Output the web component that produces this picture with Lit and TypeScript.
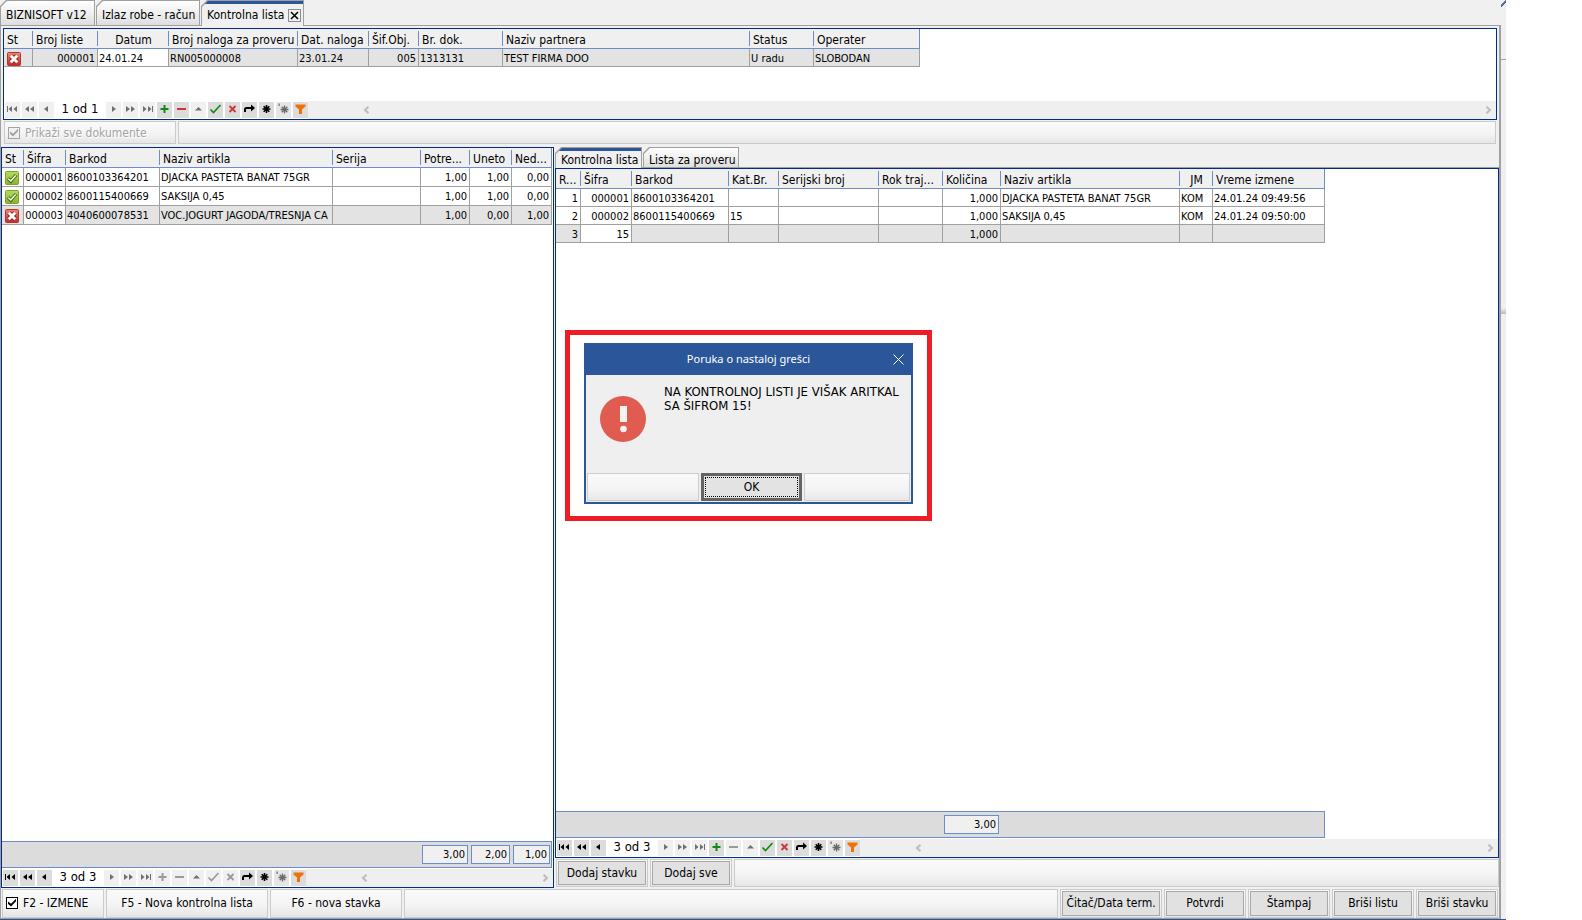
import { LitElement, html, css, svg, nothing, TemplateResult } from "lit";
import { customElement, property } from "lit/decorators.js";
import { classMap } from "lit/directives/class-map.js";

const base = css`
  * { box-sizing: border-box; }
  :host {
    --line: #a0a0a0;
    --navy: #002d8c;
    --blue: #6c8ccb;
    --accent: #2b579a;
    --face: #f0f0f0;
    font-family: "DejaVu Sans Condensed", "DejaVu Sans", Tahoma, sans-serif;
    font-size: 12px;
    color: #000;
  }
  button { font: inherit; color: inherit; margin: 0; padding: 0; border: 0; }
`;

/* ---------- navigator glyphs, centred on (7.5, 8) ---------- */
const glyphs: Record<string, TemplateResult> = {
  first: svg`<path d="M2 5h1v6h-1zM7 5v6L3.5 8zM12 5v6L8.5 8z"/>`,
  pagePrev: svg`<path d="M7 5v6L3 8zM12 5v6L8 8z"/>`,
  prev: svg`<path d="M9 5v6L5 8z"/>`,
  next: svg`<path d="M6 5v6l4-3z"/>`,
  pageNext: svg`<path d="M3 5v6l4-3zM8 5v6l4-3z"/>`,
  last: svg`<path d="M3 5v6l3.5-3zM8 5v6l3.5-3zM12 5h1v6h-1z"/>`,
  add: svg`<path d="M6.5 4h2v3h3v2h-3v3h-2v-3h-3v-2h3z"/>`,
  remove: svg`<path d="M3 7h9v2h-9z"/>`,
  edit: svg`<path d="M4 9.5h7L7.500 6z"/>`,
  post: svg`<path d="M2.500 8.500L5.500 11.500L12.500 4" fill="none" stroke="currentColor" stroke-width="1.700"/>`,
  cancel: svg`<path d="M4.500 5L10.500 11M10.500 5L4.500 11" fill="none" stroke="currentColor" stroke-width="1.800"/>`,
  refresh: svg`<path d="M3 11V8.500Q3 7 4.500 7H10" fill="none" stroke="currentColor" stroke-width="2"/><path d="M9 3.500v7L13 7z"/>`,
  mark: svg`<path d="M7.500 4v8M3.500 8h8M4.700 5.200l5.600 5.600M10.300 5.200l-5.600 5.600" fill="none" stroke="currentColor" stroke-width="1.600"/>`,
  goto: svg`<path d="M8.500 4.500v8M4.500 8.500h8M5.700 5.700l5.600 5.600M11.300 5.700l-5.600 5.600" fill="none" stroke="currentColor" stroke-width="1.300"/><path d="M2.500 2.500h1.200v2.500h-1.200z"/>`,
  filter: svg`<path d="M2.500 3.500h10v2L9 8.500v4.500h-3V8.500L2.500 5.500z"/>`,
};

const tones: Record<string, string> = {
  add: "green", remove: "red", post: "green", cancel: "red", goto: "grey", filter: "orange",
};

const before = ["first", "pagePrev", "prev"];
const after = ["next", "pageNext", "last", "add", "remove", "edit", "post", "cancel", "refresh", "mark", "goto", "filter"];

@customElement("record-navigator")
class RecordNavigator extends LitElement {
  @property() label = "";
  @property({ attribute: false }) off: string[] = [];

  static styles = [base, css`
    :host { display: flex; height: 18px; background: #fff; flex: none; }
    .buttons { display: flex; gap: 2px; padding: 1px 0 1px 1px; }
    button { width: 15px; height: 16px; background: #dcdcdc; display: block; }
    button:disabled { background: var(--face); color: #707070; }
    svg { display: block; fill: currentColor; }
    .green:enabled { color: #108a10; }
    .red:enabled { color: #d03434; }
    .orange:enabled { color: #ef7208; }
    .grey:enabled { color: #6a6a6a; background: #e6e6e6; }
    .add:disabled, .remove:disabled, .post:disabled, .cancel:disabled { color: #9a9a9a; }
    .label { width: 48px; text-align: center; font-size: 13px; line-height: 14px; white-space: nowrap; }
    .scroll { flex: 1; background: #efefef; display: flex; justify-content: space-between; align-items: center; padding: 0 4px 0 55px; }
    .scroll svg { fill: none; stroke: #bcbcbc; stroke-width: 2; }
  `];

  private button(name: string) {
    return html`<button class="${name} ${tones[name] ?? ""}" aria-label=${name} ?disabled=${this.off.includes(name)}>
      <svg width="15" height="16" viewBox="0 1 15 16">${glyphs[name]}</svg>
    </button>`;
  }

  render() {
    return html`
      <div class="buttons">
        ${before.map((n) => this.button(n))}
        <span class="label">${this.label}</span>
        ${after.map((n) => this.button(n))}
      </div>
      <div class="scroll">
        <svg width="7" height="8" viewBox="0 0 7 8"><path d="M5.500 .8L2 4l3.500 3.200"/></svg>
        <svg width="7" height="8" viewBox="0 0 7 8"><path d="M1.500 .8L5 4L1.500 7.200"/></svg>
      </div>`;
  }
}

/* ---------- data grid ---------- */
interface Column { title: string; width: number; align?: "right" | "center"; head?: "center"; total?: string; }

const statusIcon = (kind: string) => {
  const ok = kind === "ok";
  return html`<svg class="status" width="14" height="14" viewBox="0 0 14 14" role="img" aria-label=${ok ? "U redu" : "Neispravno"}>
    <defs><linearGradient id=${ok ? "g" : "r"} x1="0" y1="0" x2="0" y2="1">
      <stop offset="0" stop-color=${ok ? "#b5dc5c" : "#ea8a80"}></stop>
      <stop offset="1" stop-color=${ok ? "#86b52c" : "#c22a24"}></stop>
    </linearGradient></defs>
    <rect x=".5" y=".5" width="13" height="13" rx="1" fill=${ok ? "url(#g)" : "url(#r)"} stroke=${ok ? "#7da32c" : "#b8322c"}></rect>
    ${ok
      ? svg`<path d="M3 7.500L5.800 10.300L11 4" fill="none" stroke="#4c6a1c" stroke-width="3.400"/><path d="M3.300 7.800L5.800 10L10.700 4.400" fill="none" stroke="#f4fbe4" stroke-width="1.500"/>`
      : svg`<path d="M4 4L10 10M10 4L4 10" fill="none" stroke="#8e1c18" stroke-width="4.800"/><path d="M3.800 3.800L10.200 10.200M10.200 3.800L3.800 10.200" fill="none" stroke="#fff" stroke-width="3"/>`}
  </svg>`;
};

@customElement("data-grid")
class DataGrid extends LitElement {
  @property({ attribute: false }) columns: Column[] = [];
  @property({ attribute: false }) rows: string[][] = [];
  @property({ attribute: false }) off: string[] = [];
  @property({ type: Number }) selected = -1;
  @property({ type: Number }) focused = -1;
  @property({ type: Boolean }) totals = false;
  @property({ type: Boolean }) roomy = false;
  @property() label = "";

  static styles = [base, css`
    :host { display: flex; flex-direction: column; border: 1px solid var(--navy); background: #fff; min-width: 0; overflow: hidden; }
    .view { flex: 1; min-height: 0; }
    table { table-layout: fixed; border-collapse: separate; border-spacing: 0; }
    th, td { overflow: hidden; white-space: nowrap; text-align: left; }
    th {
      height: 20px; padding: 3px 0 0 3px; font-weight: normal; line-height: 16px;
      border-bottom: 1px solid var(--blue);
      background: linear-gradient(var(--blue), var(--blue)) right 2px / 1px 15px no-repeat, var(--face);
    }
    th:last-child { border-right: 1px solid var(--blue); background: var(--face); }
    th.center { text-align: center; padding-left: 0; }
    td { height: 18px; padding: 2px 2px 0 1px; font-size: 11px; line-height: 15px; border-right: 1px solid var(--line); border-bottom: 1px solid var(--line); }
    .tall td { height: 19px; line-height: 16px; }
    .right { text-align: right; }
    tr.current td { background: #e3e3e3; }
    tr.current td.focus { background: #fff; }
    .status { display: block; margin-left: 2px; }
    .totals { display: flex; flex: none; height: 27px; padding: 3px 0; background: #dcdcdc; border: solid var(--blue); border-width: 1px 0; box-shadow: inset -1px 0 var(--blue); margin-bottom: 1px; align-self: flex-start; }
    .total { padding: 0 2px 0 1px; display: flex; }
    output { flex: 1; height: 19px; border: 1px solid var(--blue); background: var(--face); font-size: 11px; line-height: 18px; padding-right: 2px; text-align: right; }
  `];

  render() {
    const width = this.columns.reduce((sum, c) => sum + c.width, 0);
    return html`
      <div class="view">
        <table class=${classMap({ tall: this.roomy })} style="width:${width}px">
          <colgroup>${this.columns.map((c) => html`<col style="width:${c.width}px">`)}</colgroup>
          <thead><tr>${this.columns.map((c) => html`<th class=${c.head ?? ""}>${c.title}</th>`)}</tr></thead>
          <tbody>
            ${this.rows.map((row, r) => html`<tr class=${classMap({ current: r === this.selected })}>
              ${row.map((value, i) => html`<td class=${classMap({ right: this.columns[i].align === "right", focus: i === this.focused })}>${
                value === "ok" || value === "bad" ? statusIcon(value) : value}</td>`)}
            </tr>`)}
          </tbody>
        </table>
      </div>
      ${this.totals ? html`<div class="totals">
        ${this.columns.map((c) => html`<div class="total" style="width:${c.width}px">${c.total ? html`<output>${c.total}</output>` : nothing}</div>`)}
      </div>` : nothing}
      <record-navigator .label=${this.label} .off=${this.off}></record-navigator>`;
  }
}

/* ---------- error dialog ---------- */
@customElement("error-dialog")
class ErrorDialog extends LitElement {
  static styles = [base, css`
    :host { display: block; border: 5px solid #ee1c25; background: #fff; padding: 8px 14px 12px; }
    .dialog { border: 2px solid var(--accent); border-top: 0; background: #efefef; }
    header { background: var(--accent); color: #fff; height: 32px; display: flex; align-items: center; font-family: "Noto Sans", "Open Sans", sans-serif; }
    h1 { flex: 1; margin: 0; padding: 0 0 2px 26px; font-size: 11px; font-weight: normal; text-align: center; }
    .close { width: 26px; height: 32px; background: none; display: grid; place-items: center; }
    .body { display: flex; height: 97px; padding: 10px 0 0 14px; gap: 18px; }
    .body svg { margin-top: 11px; flex: none; }
    p { margin: 0; font-size: 13px; line-height: 14px; white-space: nowrap; }
    footer { display: flex; gap: 2px; padding: 1px; height: 30px; }
    .pad { flex: 1; border: 1px solid #cdcdcd; background: linear-gradient(#fafafa, #f4f4f4 60%, #e8e8e8); }
    .pad.end { flex: none; width: 106px; }
    .ok { width: 101px; border: 3px solid #646464; background: #e3e3e3; padding: 1px; }
    .ok span { display: block; height: 20px; line-height: 18px; border: 1px dotted #000; }
  `];

  render() {
    return html`<div class="dialog" role="alertdialog" aria-labelledby="t" aria-describedby="m">
      <header>
        <h1 id="t">Poruka o nastaloj grešci</h1>
        <button class="close" aria-label="Zatvori"><svg width="11" height="11" viewBox="0 0 11 11"><path d="M.5 .5l10 10M10.500 .5l-10 10" stroke="#fff"></path></svg></button>
      </header>
      <div class="body">
        <svg width="46" height="46" viewBox="0 0 46 46"><circle cx="23" cy="23" r="23" fill="#e05c50"></circle><path d="M20 10h7v16h-7z" fill="#f6f2f0"></path><circle cx="23.500" cy="33" r="3.300" fill="#f6f2f0"></circle></svg>
        <p id="m">NA KONTROLNOJ LISTI JE VIŠAK ARITKAL<br>SA ŠIFROM 15!</p>
      </div>
      <footer><div class="pad"></div><button class="ok"><span>OK</span></button><div class="pad end"></div></footer>
    </div>`;
  }
}

/* ---------- data ---------- */
const listColumns: Column[] = [
  { title: "St", width: 29 },
  { title: "Broj liste", width: 65, align: "right" },
  { title: "Datum", width: 71, head: "center" },
  { title: "Broj naloga za proveru", width: 129 },
  { title: "Dat. naloga", width: 71 },
  { title: "Šif.Obj.", width: 50, align: "right" },
  { title: "Br. dok.", width: 84 },
  { title: "Naziv partnera", width: 247 },
  { title: "Status", width: 64 },
  { title: "Operater", width: 106 },
];
const listRows = [["bad", "000001", "24.01.24", "RN005000008", "23.01.24", "005", "1313131", "TEST FIRMA DOO", "U radu", "SLOBODAN"]];

const itemColumns: Column[] = [
  { title: "St", width: 22 },
  { title: "Šifra", width: 42, align: "right" },
  { title: "Barkod", width: 94 },
  { title: "Naziv artikla", width: 173 },
  { title: "Serija", width: 88 },
  { title: "Potre...", width: 49, align: "right", total: "3,00" },
  { title: "Uneto", width: 42, align: "right", total: "2,00" },
  { title: "Ned...", width: 40, align: "right", total: "1,00" },
];
const itemRows = [
  ["ok", "000001", "8600103364201", "DJACKA PASTETA BANAT 75GR", "", "1,00", "1,00", "0,00"],
  ["ok", "000002", "8600115400669", "SAKSIJA 0,45", "", "1,00", "1,00", "0,00"],
  ["bad", "000003", "4040600078531", "VOC.JOGURT JAGODA/TRESNJA CA", "", "1,00", "0,00", "1,00"],
];

const checkColumns: Column[] = [
  { title: "R...", width: 25, align: "right" },
  { title: "Šifra", width: 51, align: "right" },
  { title: "Barkod", width: 97 },
  { title: "Kat.Br.", width: 50 },
  { title: "Serijski broj", width: 100 },
  { title: "Rok traj...", width: 64 },
  { title: "Količina", width: 58, align: "right", total: "3,00" },
  { title: "Naziv artikla", width: 179 },
  { title: "JM", width: 33, head: "center" },
  { title: "Vreme izmene", width: 112 },
];
const checkRows = [
  ["1", "000001", "8600103364201", "", "", "", "1,000", "DJACKA PASTETA BANAT 75GR", "KOM", "24.01.24 09:49:56"],
  ["2", "000002", "8600115400669", "15", "", "", "1,000", "SAKSIJA 0,45", "KOM", "24.01.24 09:50:00"],
  ["3", "15", "", "", "", "", "1,000", "", "", ""],
];

const windowTabs = [
  { title: "BIZNISOFT v12", width: 95 },
  { title: "Izlaz robe - račun", width: 104 },
  { title: "Kontrolna lista", width: 103, active: true, closable: true },
];
const sideTabs = [
  { title: "Kontrolna lista", width: 87, active: true },
  { title: "Lista za proveru", width: 96 },
];

type Tab = { title: string; width: number; active?: boolean; closable?: boolean };

@customElement("app-root")
class AppRoot extends LitElement {
  static styles = [base, css`
    :host { display: flex; min-height: 100vh; background: #fff; padding-right: 76px; position: relative; }
    .window { flex: 1; min-width: 0; display: flex; flex-direction: column; background: var(--face); border-bottom: 1px solid var(--accent); }
    .edge { width: 5px; flex: none; background: var(--face); border-bottom: 1px solid var(--accent); display: flex; flex-direction: column; }
    .edge .cap { height: 60px; border-bottom: 1px solid var(--line); background: linear-gradient(135deg, var(--face) 3px, var(--line) 3px, var(--accent) 5px, var(--face) 5px); }
    .edge .grip { margin-top: 248px; height: 6px; background: linear-gradient(#f0f0f0, #b8b8b8); }

    .tabs { display: flex; gap: 1px; height: 26px; background: linear-gradient(var(--line), var(--line)) bottom / 100% 1px no-repeat; }
    .small { height: 21px; }
    .tab { position: relative; padding: 4px 0 0 6px; background: var(--line); white-space: nowrap; clip-path: polygon(0 6px, 6px 0, 100% 0, 100% 100%, 0 100%); }
    .tab::before { content: ""; position: absolute; inset: 1px; background: linear-gradient(#fefefe, #f0f0f0 50%, #dedede); clip-path: polygon(0 6px, 6px 0, 100% 0, 100% 100%, 0 100%); }
    .tab.active::before { background: linear-gradient(var(--accent) 3px, var(--face) 3px); bottom: 0; }
    .tab button { position: relative; background: none; line-height: 22px; }
    .small .tab button { line-height: 19px; }
    .tab .shut { width: 13px; height: 13px; border: 1px solid #8c8c8c; display: grid; place-items: center; }
    .tab.closable { display: flex; align-items: center; gap: 4px; }

    .page { flex: 1; display: flex; flex-direction: column; border: solid var(--line); border-width: 0 2px 1px 1px; }
    .lists { margin: 2px 2px 1px; height: 92px; }
    .bar { display: flex; gap: 2px; height: 29px; }
    .filters { height: 23px; margin: 0 3px 3px; }
    .panel { display: flex; align-items: center; border: 1px solid #cbcbcb; background: linear-gradient(#fafafa, #f4f4f4 55%, #e6e6e6); }
    .fill { flex: 1; }
    .panel > button { height: 100%; width: 100%; border: 1px solid #a8a8a8; background: #e1e1e1; white-space: nowrap; }
    .holder { padding: 1px; }
    .commands .panel > button { padding-bottom: 2px; }
    .commands label { padding-bottom: 2px; }
    .panel.flat > button { border: 0; background: none; }
    .w82 { width: 82px; } .w92 { width: 92px; } .w102 { width: 102px; }
    .w132 { width: 132px; } .w162 { width: 162px; } .w172 { width: 172px; }
    label { display: flex; align-items: center; gap: 5px; padding-left: 3px; }
    .muted { color: #a3a3a3; text-shadow: 1px 1px #fff; }
    input { appearance: none; margin: 0; width: 12px; height: 12px; border: 1px solid #000; background: #fff; display: grid; place-items: center; }
    input::before { content: ""; width: 8px; height: 8px; background: #000; clip-path: polygon(0 38%, 38% 66%, 100% 4%, 100% 34%, 38% 100%, 0 68%); }
    input:disabled { border-color: #a3a3a3; background: var(--face); }
    input:disabled::before { background: #a3a3a3; }

    .work { flex: 1; display: flex; gap: 1px; }
    .items { width: 553px; }
    .side { flex: 1; min-width: 0; display: flex; flex-direction: column; }
    .check { flex: 1; }
    .side .bar { margin: 1px 0 1px 1px; height: 28px; }
    .commands { margin: 1px 1px 0 1px; }
    .message { position: absolute; left: 565px; top: 330px; width: 367px; height: 191px; }
  `];

  private tabs(items: Tab[], extra = "") {
    return html`<nav class="tabs ${extra}">
      ${items.map((t) => html`<div class=${classMap({ tab: true, active: !!t.active, closable: !!t.closable })} style="width:${t.width}px">
        <button>${t.title}</button>
        ${t.closable ? html`<button class="shut" aria-label="Zatvori karticu"><svg width="9" height="9" viewBox="0 0 9 9"><path d="M1 1l7 7M8 1L1 8" stroke="#000" stroke-width="1.600"></path></svg></button>` : nothing}
      </div>`)}
    </nav>`;
  }

  private holder(title: string, size: string) {
    return html`<div class="panel holder ${size}"><button>${title}</button></div>`;
  }

  render() {
    return html`
      <main class="window">
        ${this.tabs(windowTabs)}
        <div class="page">
          <data-grid class="lists" .columns=${listColumns} .rows=${listRows} .selected=${0} .focused=${2} label="1 od 1"
            .off=${["first", "pagePrev", "prev", "next", "pageNext", "last", "edit"]}></data-grid>
          <div class="bar filters">
            <div class="panel w172"><label class="muted"><input type="checkbox" checked disabled>Prikaži sve dokumente</label></div>
            <div class="panel fill"></div>
          </div>
          <div class="work">
            <data-grid class="items" roomy totals .columns=${itemColumns} .rows=${itemRows} .selected=${2} .focused=${1} label="3 od 3"
              .off=${["next", "pageNext", "last", "add", "remove", "edit", "post", "cancel"]}></data-grid>
            <section class="side">
              ${this.tabs(sideTabs, "small")}
              <data-grid class="check" totals .columns=${checkColumns} .rows=${checkRows} .selected=${2} .focused=${1} label="3 od 3"
                .off=${["next", "pageNext", "last", "remove", "edit"]}></data-grid>
              <div class="bar">
                ${this.holder("Dodaj stavku", "w92")}
                ${this.holder("Dodaj sve", "w82")}
                <div class="panel fill"></div>
              </div>
            </section>
          </div>
          <div class="bar commands">
            <div class="panel w102"><label><input type="checkbox" checked>F2 - IZMENE</label></div>
            <div class="panel flat w162"><button>F5 - Nova kontrolna lista</button></div>
            <div class="panel flat w132"><button>F6 - nova stavka</button></div>
            <div class="panel fill"></div>
            ${this.holder("Čitač/Data term.", "w102")}
            ${this.holder("Potvrdi", "w82")}
            ${this.holder("Štampaj", "w82")}
            ${this.holder("Briši listu", "w82")}
            ${this.holder("Briši stavku", "w82")}
          </div>
        </div>
      </main>
      <aside class="edge"><div class="cap"></div><div class="grip"></div></aside>
      <error-dialog class="message"></error-dialog>`;
  }
}
